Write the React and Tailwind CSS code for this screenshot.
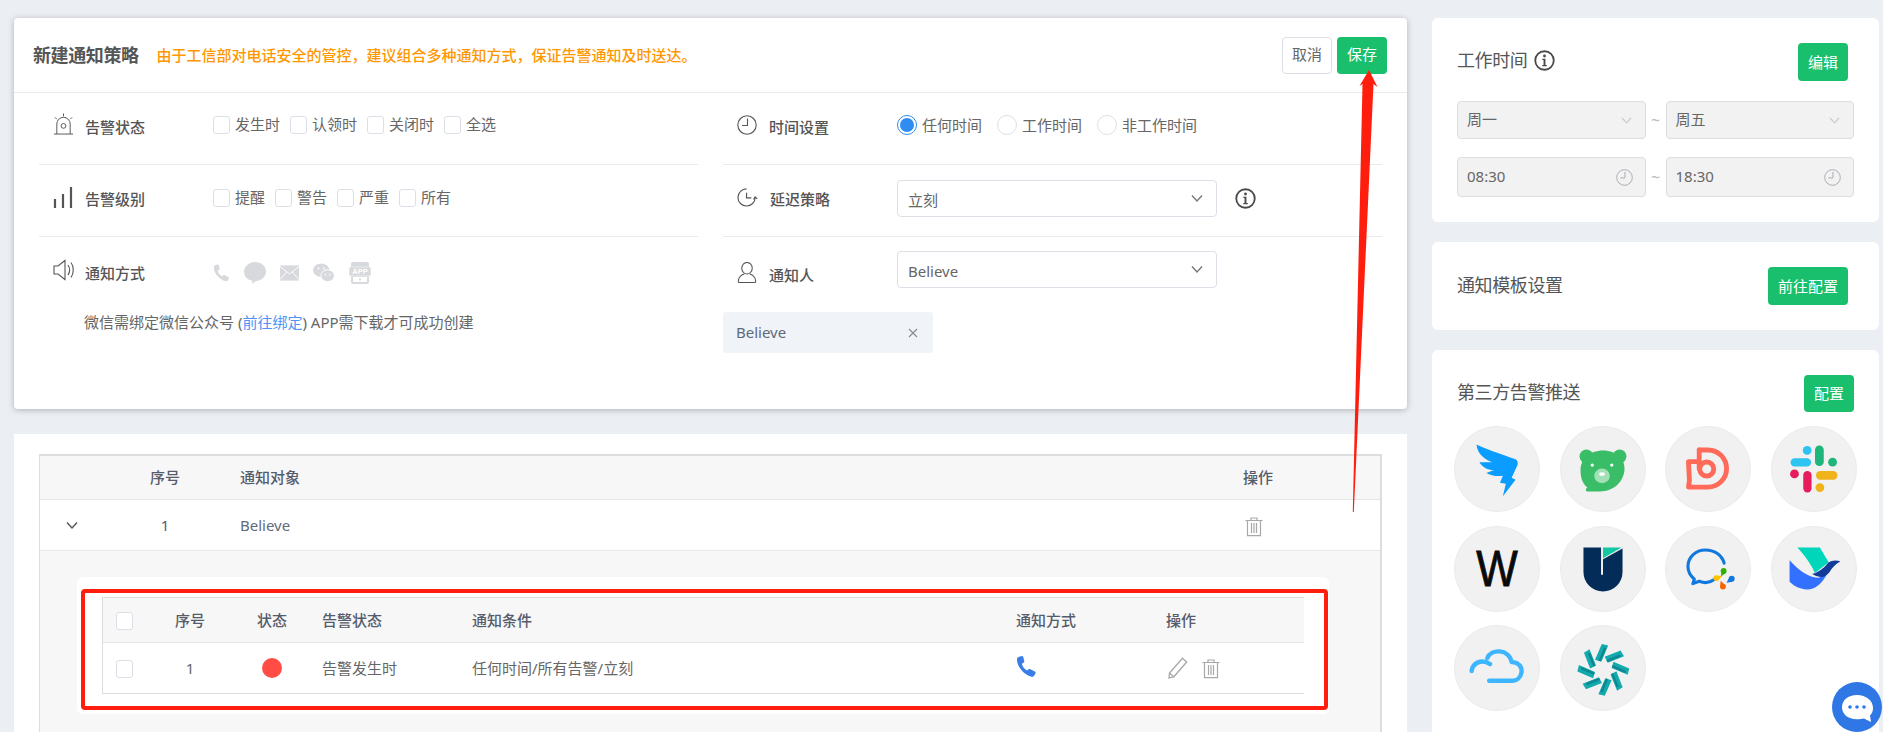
import React from "react";

const Chevron = ({ className = "w-[14px] h-[9px]", color = "#777" }) => (
  <svg viewBox="0 0 14 9" className={className} fill="none" stroke={color} strokeWidth="1.4"><path d="M2 1.5 7 7l5-5.5" /></svg>
);
const Info = ({ className }) => (
  <svg viewBox="0 0 22 22" className={className} fill="none">
    <circle cx="11" cy="11" r="9.7" stroke="#4a4a4a" strokeWidth="1.9" />
    <circle cx="11" cy="6.3" r="1.5" fill="#4a4a4a" />
    <path d="M8.7 9.2h3.3v6.6h1.4v1.2H8.7v-1.2h1.3v-5.4H8.7z" fill="#4a4a4a" />
  </svg>
);
const Clock = ({ className, color = "#555" }) => (
  <svg viewBox="0 0 20 20" className={className} fill="none" stroke={color} strokeWidth="1.1">
    <circle cx="10" cy="10" r="9.2" /><path d="M10.5 3.500v7H5" />
  </svg>
);
const Trash = ({ className }) => (
  <svg viewBox="0 0 18 20" className={className} fill="none" stroke="#a8a8a8" strokeWidth="1.2">
    <path d="M0.5 3.5h17M6 3.5V1h6v2.5" /><path d="M2.5 3.5v15.2h13V3.5" /><path d="M6.5 6v10M9 6v10M11.5 6v10" />
  </svg>
);
const Pencil = ({ className }) => (
  <svg viewBox="0 0 20 22" className={className} fill="none" stroke="#a8a8a8" strokeWidth="1.3">
    <path d="M1.5 16 14.5 1.2l4.2 3.8L5.8 19.8 1 21z" /><path d="M1.5 16l4.3 3.8" />
  </svg>
);
const Phone = ({ className, color }) => (
  <svg viewBox="0 0 20 20" className={className}>
    <path d="M3 .6 5.800.1c.6 0 .9.3 1.100.8l1 4.200c.1.5-.1.8-.5 1.100L5.600 7.400c.4 2.300 2.700 5.400 4.900 6.500l1.500-1.300c.5-.4.900-.4 1.300-.2l4.600 2.300c.7.400 1 1 .7 1.700l-1.300 2.300c-.6 1-1.600 1.200-2.600 1C7.800 18.200 1.100 10.400.9 3.600.8 2 1.600 1 3 .6z" fill={color} />
  </svg>
);

const Box = () => <span className="block w-[17px] h-[18px] shrink-0 rounded-[3px] border border-[#dcdfe6] bg-white" />;

const Label = ({ icon, children, className = "", textClass = "" }) => (
  <div className={`flex items-start ${className}`}>
    {icon}
    <span className={`text-[15px] leading-[24px] font-medium text-[#555] ${textClass}`}>{children}</span>
  </div>
);

const Radio = ({ on, children }) => (
  <div className="flex items-center gap-[5px] w-[100px] h-[20px] text-[15px] text-[#666]">
    <span className={`w-[20px] h-[20px] shrink-0 rounded-full bg-white flex items-center justify-center border ${on ? "border-[#2f8cf0]" : "border-[#dcdfe6]"}`}>
      {on && <span className="w-[14px] h-[14px] rounded-full bg-[#2f8cf0]" />}
    </span>
    <span className="whitespace-nowrap">{children}</span>
  </div>
);

const Select = ({ children }) => (
  <div className="w-[320px] h-[37px] rounded-[4px] border border-[#dcdfe6] bg-white flex items-center justify-between pl-[10px] pr-[12px] text-[15px] text-[#666]">
    <span className="pt-[4px]">{children}</span>
    <Chevron />
  </div>
);

const GreenBtn = ({ className, children }) => (
  <div className={`flex items-center justify-center rounded-[4px] bg-[#19bf6c] text-white text-[15px] ${className}`}>{children}</div>
);

const GrayField = ({ children, icon, className }) => (
  <div className={`flex-1 rounded-[4px] border border-[#dddddd] bg-[#f2f2f2] flex items-center justify-between pl-[9px] pr-[12px] text-[15px] text-[#666] ${className}`}>
    <span className="pb-[2px]">{children}</span>{icon}
  </div>
);

const Tilde = () => <span className="w-[20px] text-center text-[16px] text-[#bbb]">~</span>;

const Dingtalk = () => (
  <path fill="#0a9cff" d="M22 18C35 24 50 29 62 33Q65 35 64 39L58 52 62 54 49 71 52 58 46 57 49 50C42 51 36 49 32 47L40 44C33 44 28 41 25 36L38 36C30 33 23 28 22 18Z" />
);
const Bear = () => (
  <g>
    <circle cx="26" cy="30" r="7" fill="#39bd66" /><circle cx="60" cy="30" r="7" fill="#39bd66" />
    <path fill="#39bd66" d="M43 24C58 24 66 34 65 44 64 56 54 66 40 66H27C25 66 25 63 27 62 21 57 20 50 20 44 20 33 29 24 43 24Z" />
    <ellipse cx="42" cy="50" rx="8" ry="7.500" fill="#a2e0b6" /><ellipse cx="42" cy="48" rx="3" ry="1.800" fill="#fff" />
    <circle cx="32" cy="39" r="1.700" fill="#fff" /><circle cx="52" cy="39" r="1.700" fill="#fff" />
  </g>
);
const RedD = () => (
  <g fill="none" stroke="#ff6b58" strokeWidth="5" strokeLinejoin="round" strokeLinecap="round">
    <path d="M34 23.500H43A19 19 0 0 1 43 61.500H23L24 55 23 35.500H34" />
    <path d="M34 23.500V43" />
    <circle cx="41.700" cy="43" r="7.200" />
  </g>
);
const Slack = () => (
  <g>
    <rect x="19" y="32" width="21" height="8.500" rx="4.250" fill="#2ec4f1" /><circle cx="36" cy="24" r="4.500" fill="#2ec4f1" />
    <rect x="44" y="19" width="9" height="21" rx="4.500" fill="#20b57a" /><circle cx="62" cy="36" r="4.500" fill="#20b57a" />
    <rect x="45" y="45" width="22" height="9" rx="4.500" fill="#f0b41a" /><circle cx="49" cy="62" r="4.500" fill="#f0b41a" />
    <rect x="32" y="45" width="8.500" height="22" rx="4.250" fill="#e61c5d" /><circle cx="23" cy="48" r="4.500" fill="#e61c5d" />
  </g>
);
const UIcon = () => (
  <g>
    <path fill="#042c58" d="M23 21H41V49H43V33L63 22V46A20 20 0 0 1 23 46Z" />
    <path fill="#14c7a4" d="M43 21H62L43 32Z" />
  </g>
);
const WeCom = () => (
  <g>
    <path fill="none" stroke="#1078de" strokeWidth="3.200" strokeLinecap="round" strokeLinejoin="round" d="M59.500 37C57 28 49 23.500 40.500 23.500 30 23.500 22.500 31 22.500 40.500 22.500 46 25.500 50.500 29 53.500L27.500 58 34 55.500C39 57.500 45 57 49 54" />
    <circle cx="59" cy="45" r="3" fill="#2db200" /><path d="M57 46 61 47 56 51Z" fill="#2db200" />
    <circle cx="51.500" cy="52.300" r="3" fill="#ffc400" /><path d="M52 50 53 55 58 50Z" fill="#ffc400" />
    <circle cx="67.300" cy="53" r="3" fill="#1078de" /><path d="M65 51 68 56 62 57Z" fill="#1078de" />
    <circle cx="58.300" cy="61" r="3" fill="#fa6400" /><path d="M55.500 60 61 60 56 55Z" fill="#fa6400" />
  </g>
);
const Feishu = () => (
  <g>
    <path fill="#00d6b9" d="M26 21H49L58 36 44 47Q38 34 26 21Z" />
    <path fill="#3370ff" d="M18 34Q34 52 48 52L57 47Q46 68 30 63 23 61 18 56Z" />
    <path fill="#133c9a" d="M41 48Q50 46 58 36 63 33 70 35 62 40 59 46 52 55 41 48Z" />
  </g>
);
const CloudI = () => (
  <g fill="none" stroke="#3db5ff" strokeWidth="4.500" strokeLinecap="round" strokeLinejoin="round">
    <path d="M17 46C18 38 27 33 36 39" />
    <path d="M33 33C37 23 55 23 58 37 66 37 69 43 68 48 67 53 63 56 59 56H35" />
  </g>
);
const Spark = () => (
  <g>
    {[0, 45, 90, 135, 180, 225, 270, 315].map((a) => (
      <g key={a} transform={`translate(43.300 45) rotate(${a})`}>
        <path d="M-8.500-10.500-2-8.500 5-25-1.500-26.500Z" fill="#13aaae" />
        <path d="M-5-9.500-2.800-8.800 3-22 .8-23Z" fill="#0e8791" />
      </g>
    ))}
  </g>
);
const WLogo = () => (
  <text transform="translate(43 60) scale(1 1.130)" textAnchor="middle" fontFamily="Liberation Sans" fontSize="45" fill="#0a0a0a" stroke="#0a0a0a" strokeWidth="0.800">W</text>
);

const logos = [Dingtalk, Bear, RedD, Slack, WLogo, UIcon, WeCom, Feishu, CloudI, Spark];

const Th = ({ className = "", children }) => <div className={`font-medium text-[#555c6b] ${className}`}>{children}</div>;

const CheckItem = ({ w, children }) => (
  <div className={`flex items-center gap-[5px] h-[18px] text-[15px] text-[#666] ${w}`}><Box /><span className="pb-[2px]">{children}</span></div>
);

export default function App() {
  return (
    <div className="relative flex gap-[25px] h-[732px] overflow-hidden bg-[#ebeef3] pl-[14px] pt-[18px] text-[15px] text-[#666] font-['Noto_Sans','Noto_Sans_CJK_SC',sans-serif]">
      {/* left column */}
      <div className="w-[1393px] shrink-0 flex flex-col gap-[25px]">
        <div className="h-[391px] shrink-0 rounded-[4px] bg-white shadow-[0_1px_6px_rgba(0,0,0,0.25)]">
          <div className="h-[75px] border-b border-[#e8eaec] flex items-center pl-[19px] pr-[20px]">
            <span className="text-[18px] font-bold text-[#555] tracking-[-0.4px] pt-[1px]">新建通知策略</span>
            <span className="ml-[18px] text-[15px] font-medium text-[#ff9800] whitespace-nowrap">由于工信部对电话安全的管控，建议组合多种通知方式，保证告警通知及时送达。</span>
            <div className="ml-auto flex gap-[5px]">
              <div className="w-[50px] h-[37px] pb-[2px] rounded-[4px] border border-[#dcdfe6] bg-white flex items-center justify-center text-[15px] text-[#666]">取消</div>
              <GreenBtn className="w-[50px] h-[37px] pb-[2px]">保存</GreenBtn>
            </div>
          </div>
          <div className="flex gap-[25px] pl-[25px]">
            {/* left form */}
            <div className="w-[659px]">
              <div className="h-[72px] border-b border-[#e8eaec] pt-[23px] pl-[14px] flex">
                <Label className="w-[160px]" textClass="-mt-[1px]" icon={
                  <svg viewBox="0 0 22 24" className="w-[21px] h-[24px] mr-[11px] -mt-[4px]" fill="none" stroke="#555" strokeWidth="1">
                    <path d="M4 22.500V12a7 7 0 0 1 14 0v10.500M1 22.500h20" /><circle cx="11" cy="14" r="2.500" /><path d="M11 1v3M2 5l2 2M20 5l-2 2" />
                  </svg>}>告警状态</Label>
                <div className="flex">
                  {["发生时", "认领时", "关闭时", "全选"].map((t) => (
                    <CheckItem key={t} w="w-[77px]">{t}</CheckItem>
                  ))}
                </div>
              </div>
              <div className="h-[72px] border-b border-[#e8eaec] pt-[24px] pl-[14px] flex">
                <Label className="w-[160px]" textClass="-mt-[2px]" icon={
                  <svg viewBox="0 0 20 22" className="w-[20px] h-[22px] mr-[12px] -mt-[3px]" fill="none" stroke="#555" strokeWidth="2.200">
                    <path d="M2 22V13M10 22V8M18 22V1" />
                  </svg>}>告警级别</Label>
                <div className="flex">
                  {["提醒", "警告", "严重", "所有"].map((t) => (
                    <CheckItem key={t} w="w-[62px]">{t}</CheckItem>
                  ))}
                </div>
              </div>
              <div className="pt-[25px] pl-[14px]">
                <div className="flex">
                  <Label className="w-[160px]" textClass="-mt-[1px]" icon={
                    <svg viewBox="0 0 22 22" className="w-[22px] h-[22px] mr-[10px] -mt-[3px]" fill="none" stroke="#555" strokeWidth="1.100">
                      <path d="M1 7h4l7-5.500v19L5 15H1z" /><path d="M15 6c2 3 2 7 0 10M18 3.500c3 4 3 11 0 15" />
                    </svg>}>通知方式</Label>
                  <div className="flex items-center h-[22px]">
                    <Phone className="w-[17px] h-[20px] mr-[14px]" color="#d8d9dd" />
                    <svg viewBox="0 0 22 22" className="w-[22px] h-[22px] mr-[14px]"><path d="M11 0c6 0 11 4 11 9.500S17 19 12 19l-4 3 .5-3.300C3.500 18 0 14.500 0 9.500S5 0 11 0z" fill="#d8d9dd" /></svg>
                    <svg viewBox="0 0 20 16" className="w-[19px] h-[16px] mr-[14px]"><rect width="20" height="16" fill="#d8d9dd" /><path d="M0 1l10 8 10-8M0 15l7-8M20 15l-7-8" stroke="#fff" strokeWidth="1" fill="none" /></svg>
                    <svg viewBox="0 0 24 22" className="w-[22px] h-[20px] mr-[14px]">
                      <ellipse cx="9" cy="8" rx="9" ry="7.500" fill="#d8d9dd" /><ellipse cx="16" cy="14" rx="7.500" ry="6.500" fill="#d8d9dd" stroke="#fff" strokeWidth="1" />
                      <circle cx="6" cy="6" r="1" fill="#fff" /><circle cx="12" cy="6" r="1" fill="#fff" /><circle cx="13.500" cy="13" r=".9" fill="#fff" /><circle cx="18.500" cy="13" r=".9" fill="#fff" />
                    </svg>
                    <svg viewBox="0 0 22 22" className="w-[22px] h-[22px]">
                      <rect x="2" y="0" width="18" height="22" rx="2" fill="#d8d9dd" /><rect x="0" y="5" width="22" height="9" rx="1.500" fill="#d8d9dd" stroke="#fff" strokeWidth=".5" />
                      <rect x="4" y="15" width="14" height="5" fill="#fff" /><rect x="10" y="16.500" width="2" height="2" fill="#d8d9dd" />
                      <text x="11" y="12.300" textAnchor="middle" fontSize="7.500" fontWeight="700" fill="#fff" fontFamily="Liberation Sans">APP</text>
                    </svg>
                  </div>
                </div>
                <div className="mt-[25px] ml-[31px] text-[15px] leading-[24px] text-[#666] whitespace-nowrap">微信需绑定微信公众号 (<span className="text-[#4d94f5]">前往绑定</span>) APP需下载才可成功创建</div>
              </div>
            </div>
            {/* right form */}
            <div className="w-[659px]">
              <div className="h-[72px] border-b border-[#e8eaec] pt-[22px] pl-[14px] flex">
                <Label className="w-[160px]" icon={<Clock className="w-[20px] h-[20px] mr-[12px]" />}>时间设置</Label>
                <Radio on>任何时间</Radio>
                <Radio>工作时间</Radio>
                <Radio>非工作时间</Radio>
              </div>
              <div className="h-[72px] border-b border-[#e8eaec] pt-[15px] pl-[14px] flex">
                <Label className="w-[160px] pt-[7px]" icon={
                  <svg viewBox="0 0 22 22" className="w-[21px] h-[21px] mr-[12px] -mt-[1px]" fill="none" stroke="#555" strokeWidth="1.200">
                    <path d="M10 3A9 9 0 1 0 19 12" /><path d="M10 7v5.500h5M17.300 14 19 11.500 21.300 13.500" />
                  </svg>}>延迟策略</Label>
                <Select>立刻</Select>
                <Info className="w-[21px] h-[21px] ml-[18px] mt-[8px]" />
              </div>
              <div className="pt-[14px]">
                <div className="flex pl-[14px]">
                  <Label className="w-[160px] pt-[13px]" textClass="-mt-[1px]" icon={
                    <svg viewBox="0 0 20 22" className="w-[20px] h-[21px] mr-[12px] -mt-[2px]" fill="none" stroke="#555" strokeWidth="1.100">
                      <ellipse cx="10" cy="6.500" rx="5.500" ry="6" /><path d="M1 21.500v-2c0-4 4-6.500 6-7M19 21.500v-2c0-4-4-6.500-6-7M1 21.500h18" />
                    </svg>}>通知人</Label>
                  <Select>Believe</Select>
                </div>
                <div className="mt-[24px] w-[210px] h-[41px] rounded-[3px] bg-[#f0f3f8] flex items-center justify-between pl-[13px] pr-[15px] text-[15px] text-[#606a7b]">
                  <span>Believe</span>
                  <svg viewBox="0 0 10 10" className="w-[10px] h-[10px]" fill="none" stroke="#8a8a8a" strokeWidth="1.100"><path d="M1 1l8 8M9 1l-8 8" /></svg>
                </div>
              </div>
            </div>
          </div>
        </div>

        {/* table panel */}
        <div className="flex-1 bg-white pt-[20px] pl-[25px] pr-[25px]">
          <div className="h-[400px] border-t-2 border-r-2 border-l border-[#dddddd]">
            <div className="h-[44px] bg-[#f7f7f7] border-b border-[#e5e5e5] grid grid-cols-[95px_60px_1048px_1fr] items-center">
              <div />
              <Th className="text-center">序号</Th>
              <Th className="pl-[45px]">通知对象</Th>
              <Th>操作</Th>
            </div>
            <div className="h-[51px] border-b border-[#e8e8e8] grid grid-cols-[95px_60px_1048px_1fr] items-center">
              <div className="pl-[25px]"><Chevron className="w-[14px] h-[9px]" color="#555" /></div>
              <div className="text-center text-[#45627f]">1</div>
              <div className="pl-[45px] text-[#606a7b]">Believe</div>
              <div className="pl-[2px] pt-[3px]"><Trash className="w-[18px] h-[20px]" /></div>
            </div>
            <div className="h-[300px] bg-[#f7f7f7] pt-[26px] pl-[37px] pr-[51px]">
              <div className="relative h-[137px] rounded-[6px] bg-white pt-[20px] pl-[25px] pr-[25px]">
                <div className="border-t border-l border-b border-[#dddddd] h-[97px]">
                  <div className="h-[45px] bg-[#f7f7f7] border-b border-[#e5e5e5] grid grid-cols-[57px_60px_102px_150px_544px_150px_1fr] items-center">
                    <div className="pl-[13px] pt-[2px]"><Box /></div>
                    <Th className="text-center">序号</Th>
                    <Th className="text-center pl-[22px] pr-[20px]">状态</Th>
                    <Th>告警状态</Th>
                    <Th>通知条件</Th>
                    <Th>通知方式</Th>
                    <Th>操作</Th>
                  </div>
                  <div className="h-[50px] grid grid-cols-[57px_60px_102px_150px_544px_150px_1fr] items-center text-[#666]">
                    <div className="pl-[13px] pt-[1px]"><Box /></div>
                    <div className="text-center">1</div>
                    <div className="pl-[42px]"><div className="w-[20px] h-[20px] rounded-full bg-[#ff4d45]" /></div>
                    <div>告警发生时</div>
                    <div>任何时间/所有告警/立刻</div>
                    <div className="pb-[3px]"><Phone className="w-[21px] h-[21px]" color="#3b7de8" /></div>
                    <div className="flex items-center gap-[14px] pl-[2px]">
                      <Pencil className="w-[20px] h-[22px]" />
                      <Trash className="w-[18px] h-[20px] mt-[2px]" />
                    </div>
                  </div>
                </div>
                <div className="absolute left-[4px] top-[12px] right-[1px] bottom-[4px] rounded-[4px] border-4 border-[#ff1e0e]" />
              </div>
            </div>
          </div>
        </div>
      </div>

      {/* right column */}
      <div className="w-[447px] shrink-0 flex flex-col gap-[20px]">
        <div className="h-[204px] shrink-0 rounded-[6px] bg-white pl-[25px] pr-[25px] pt-[25px]">
          <div className="flex items-center h-[38px] pr-[6px]">
            <span className="text-[18px] text-[#555] tracking-[-0.4px] pb-[3px]">工作时间</span>
            <Info className="w-[21px] h-[21px] ml-[7px] -mt-[4px]" />
            <GreenBtn className="ml-auto w-[50px] h-[38px]">编辑</GreenBtn>
          </div>
          <div className="mt-[20px] flex items-center">
            <GrayField className="h-[38px]" icon={<Chevron className="w-[13px] h-[9px]" color="#ccc" />}>周一</GrayField>
            <Tilde />
            <GrayField className="h-[38px]" icon={<Chevron className="w-[13px] h-[9px]" color="#ccc" />}>周五</GrayField>
          </div>
          <div className="mt-[18px] flex items-center">
            <GrayField className="h-[40px]" icon={<Clock className="w-[17px] h-[17px]" color="#a8a8b0" />}>08:30</GrayField>
            <Tilde />
            <GrayField className="h-[40px]" icon={<Clock className="w-[17px] h-[17px]" color="#a8a8b0" />}>18:30</GrayField>
          </div>
        </div>
        <div className="h-[88px] shrink-0 rounded-[6px] bg-white pl-[25px] pr-[31px] flex items-center justify-between">
          <span className="text-[18px] text-[#555] tracking-[-0.4px] pb-[2px]">通知模板设置</span>
          <GreenBtn className="w-[80px] h-[38px]">前往配置</GreenBtn>
        </div>
        <div className="flex-1 rounded-t-[6px] bg-white pt-[25px] pl-[22px] pr-[25px]">
          <div className="flex items-center justify-between pl-[3px] h-[37px]">
            <span className="text-[18px] text-[#555] tracking-[-0.4px] pb-[3px]">第三方告警推送</span>
            <GreenBtn className="w-[50px] h-[37px]">配置</GreenBtn>
          </div>
          <div className="mt-[14px] grid grid-cols-[repeat(4,86px)] gap-x-[19.670px] gap-y-[13.500px]">
            {logos.map((L, i) => (
              <div key={i} className="w-[86px] h-[86px] rounded-full bg-[#f1f1f1] border border-[#ebebeb]">
                <svg viewBox="0 0 86 86" className="w-full h-full"><L /></svg>
              </div>
            ))}
          </div>
        </div>
      </div>

      {/* annotation arrow */}
      <svg className="absolute left-0 top-0 w-[1883px] h-[732px] pointer-events-none" viewBox="0 0 1883 732">
        <polygon fill="#ff1e0e" points="1369,70 1377.500,87 1373.500,84 1353.800,512 1352.800,512 1362.500,84 1359.500,86" />
      </svg>

      {/* floating chat button */}
      <div className="absolute left-[1832px] top-[682px] w-[50px] h-[50px] rounded-full bg-[#2f77e5] flex items-center justify-center">
        <svg viewBox="0 0 50 50" className="w-[50px] h-[50px]">
          <path d="M25 13c9 0 16 5.500 16 13 0 3-1 5.500-3 7.500l1 6.500-7-3.500c-2 .5-4.500.8-7 .8-9 0-15-5-15-12S16 13 25 13z" fill="#fff" />
          <circle cx="18" cy="25" r="1.800" fill="#2f77e5" /><circle cx="25" cy="25" r="1.800" fill="#2f77e5" /><circle cx="32" cy="25" r="1.800" fill="#2f77e5" />
        </svg>
      </div>
    </div>
  );
}
